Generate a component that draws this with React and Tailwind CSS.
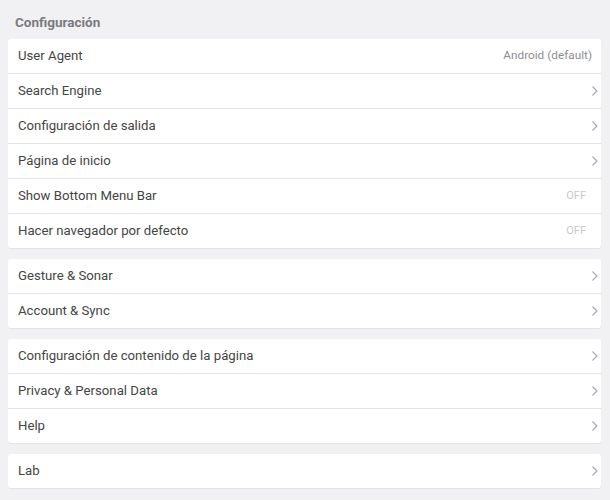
import React from "react";

const Chevron = () => (
  <svg width="6" height="10" viewBox="0 0 6 10" fill="none" className="shrink-0">
    <path d="M0.8 0.8 L4.9 5 L0.8 9.2" stroke="#a9a9ad" strokeWidth="1.2" strokeLinecap="round" strokeLinejoin="round" />
  </svg>
);

const Row = ({ label, right, first }) => {
  const pr = right === "chev" ? "pr-[3px]" : right === "off" ? "pr-[15px]" : "pr-[9px]";
  return (
    <div className={`flex items-center justify-between pl-[10px] ${pr} ${first ? "h-[34px]" : "h-[35px] border-t border-[#e4e3e7]"}`}>
      <span className="text-[13.2px] text-[#454545]">{label}</span>
      {right === "chev" && <Chevron />}
      {right === "off" && <span className="text-[11px] text-[#c9c9cc]">OFF</span>}
      {right === "android" && <span className="text-[11.8px] text-[#8e8e92]">Android (default)</span>}
    </div>
  );
};

const Card = ({ rows }) => (
  <div className="rounded-[3px] bg-white shadow-[0_1px_1px_rgba(0,0,0,0.06)]">
    {rows.map((r, i) => (
      <Row key={r[0]} label={r[0]} right={r[1]} first={i === 0} />
    ))}
  </div>
);

export default function App() {
  return (
    <div className="h-[500px] w-[610px] bg-[#f1f0f3] pl-[8px] pr-[9px] pt-[12px]" style={{ fontFamily: "Roboto, 'Noto Sans', sans-serif" }}>
      <div className="pl-[7px] text-[13.5px] font-bold leading-[20px] text-[#7a7a7e]">Configuración</div>
      <div className="mt-[7px] flex flex-col gap-[11px]">
        <Card
          rows={[
            ["User Agent", "android"],
            ["Search Engine", "chev"],
            ["Configuración de salida", "chev"],
            ["Página de inicio", "chev"],
            ["Show Bottom Menu Bar", "off"],
            ["Hacer navegador por defecto", "off"],
          ]}
        />
        <Card rows={[["Gesture & Sonar", "chev"], ["Account & Sync", "chev"]]} />
        <Card
          rows={[
            ["Configuración de contenido de la página", "chev"],
            ["Privacy & Personal Data", "chev"],
            ["Help", "chev"],
          ]}
        />
        <Card rows={[["Lab", "chev"]]} />
      </div>
    </div>
  );
}
